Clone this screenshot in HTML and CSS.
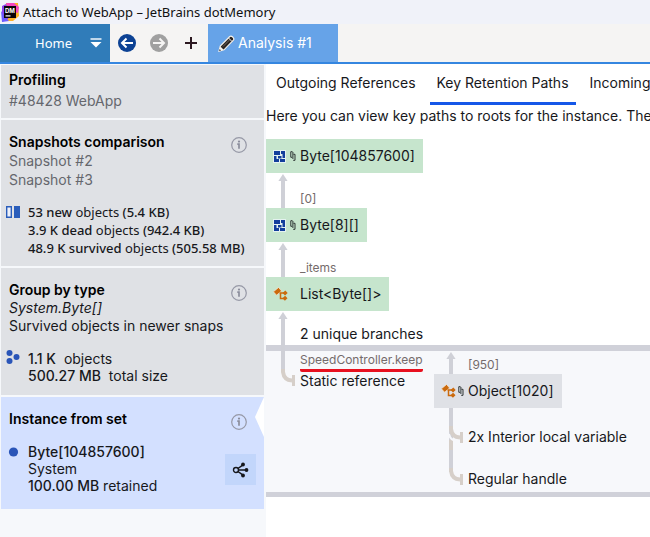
FILE: index.html
```html
<!DOCTYPE html>
<html lang="en">
<head>
    <meta charset="UTF-8">
    <meta name="viewport" content="width=device-width, initial-scale=1.0">
    <title>Attach to WebApp – JetBrains dotMemory</title>
    <link rel="stylesheet" href="styles.css">
</head>
<body>

<!-- Shared icons -->
<svg class="sprite" aria-hidden="true">
    <symbol id="icon-info" viewBox="0 0 16 16">
        <circle cx="8" cy="8" r="7.3" fill="none" stroke="#9698a6" stroke-width="1.2"/>
        <circle cx="8" cy="4.6" r="1.1" fill="#8b8d9c"/>
        <path d="M6.3 7.2H8v4.6" fill="none" stroke="#8b8d9c" stroke-width="1.7"/>
    </symbol>
    <symbol id="icon-array" viewBox="0 0 13 13">
        <path d="M0 0h13v13H0z" fill="#e4f2f0"/>
        <path d="M1 1h6v4H1zM8 1h4v7H9.500V4H8zM1 6h2.500v3H6v3H1zM5 6h3.500v2.500H5zM7 9h5v3H7z" fill="#123e9c"/>
    </symbol>
    <symbol id="icon-link" viewBox="0 0 6 10">
        <path d="M2.500 0.700H0.800v5.600H2.200M3.400 3.300h1.600v6H3.200M2.900 1v7" fill="none" stroke="#2c3333" stroke-width="1"/>
    </symbol>
    <symbol id="icon-class" viewBox="0 0 15 14">
        <path d="M0.400 4.800 5.600 0.400 8.600 4 3.600 8.200z" fill="#cb6a0d" stroke="#f7e9d8" stroke-width="0.700"/>
        <path d="M6.500 6h5M7.500 6v5.500h4" fill="none" stroke="#cb6a0d" stroke-width="1.500"/>
        <path d="M9.600 6 12.300 3.400 14.700 5.900 12 8.600zM9.500 11.300l2.600-2.500 2.400 2.500-2.600 2.500z" fill="#cb6a0d"/>
    </symbol>
    <symbol id="icon-arrow" viewBox="0 0 10 35" preserveAspectRatio="xMidYMin slice">
        <path d="M5 5v30" stroke="#cfd0d7" stroke-width="4"/>
        <path d="M5 1 9.600 8H0.400z" fill="#cfd0d7"/>
    </symbol>
</svg>

<header class="titlebar">
    <svg class="logo" viewBox="0 0 18 20" aria-hidden="true">
        <path d="M5 1h12l1 13-6 5H4z" fill="#ffb224"/>
        <path d="M5 1h8l5 4-1 6-10-3z" fill="#f545c0"/>
        <path d="M1 4l4-2 4 8-2 7-6 3z" fill="#8b42ef"/>
        <path d="M0 9l5 7 3 3-7 1z" fill="#6c5cff"/>
        <path d="M3 4h12v12H3z" fill="#0b0306"/>
        <path d="M4.500 13.300h5v1.200h-5z" fill="#fff"/>
        <text class="logo-text" x="4" y="10.500">DM</text>
    </svg>
    <span>Attach to WebApp – JetBrains dotMemory</span>
</header>

<nav class="toolbar">
    <button class="home" type="button">
        <span>Home</span>
        <svg width="12" height="10" viewBox="0 0 12 10" aria-hidden="true">
            <path d="M0.500 1h11" stroke="#fff" stroke-width="1.400"/>
            <path d="M0.500 4h11L6 9.500z" fill="#fff"/>
        </svg>
    </button>
    <div class="tools">
        <button class="tool" type="button" aria-label="Back">
            <svg width="18" height="18" viewBox="0 0 18 18">
                <circle cx="9" cy="9" r="9" fill="#0d4294"/>
                <path d="M15 9H4.500M8.500 4.500 4 9l4.500 4.500" fill="none" stroke="#fff" stroke-width="2"/>
            </svg>
        </button>
        <button class="tool" type="button" aria-label="Forward">
            <svg width="18" height="18" viewBox="0 0 18 18">
                <circle cx="9" cy="9" r="9" fill="#a0a0a0"/>
                <path d="M3 9h10.500M9.500 4.500 14 9l-4.500 4.500" fill="none" stroke="#f5f4f3" stroke-width="2"/>
            </svg>
        </button>
        <button class="tool" type="button" aria-label="Add">
            <svg width="12" height="12" viewBox="0 0 12 12">
                <path d="M6 0v12M0 6h12" stroke="#2c1820" stroke-width="2"/>
            </svg>
        </button>
    </div>
    <button class="analysis" type="button">
        <svg width="17" height="17" viewBox="0 0 17 17" aria-hidden="true">
            <path d="M1 16.200 2.300 11 11.800 1.500q1.200-1 2.600.3l.8.8q1.200 1.400.2 2.600L6 14.800z" fill="#2b2522" stroke="#f4f2ee" stroke-width="1.200"/>
            <path d="M5 11.500 12 4.500" stroke="#77716c" stroke-width="0.900"/>
            <path d="M10.500 3l3.400 3.400" stroke="#f4f2ee" stroke-width="1"/>
            <path d="M1.200 16l1.200-4.500 3.300 3.300z" fill="#f4f2ee"/>
            <path d="M1.200 16l.5-1.900 1.300 1.300z" fill="#2b2522"/>
        </svg>
        <span>Analysis #1</span>
    </button>
</nav>

<div class="workspace">
    <aside class="sidebar">
        <section class="card card-profiling">
            <h2>Profiling</h2>
            <p class="muted">#48428 WebApp</p>
        </section>

        <section class="card card-snapshots">
            <button class="info" type="button" aria-label="About snapshots comparison"><svg><use href="#icon-info"/></svg></button>
            <h2>Snapshots comparison</h2>
            <p class="muted">Snapshot #2</p>
            <p class="muted">Snapshot #3</p>
            <div class="stats compare">
                <svg width="14" height="12" viewBox="0 0 14 12" aria-hidden="true">
                    <path d="M0.700 0.700h4.600v10.600H0.700z" fill="#edf1fb" stroke="#2a5dbb" stroke-width="1.400"/>
                    <path d="M8 0h6v12H8z" fill="#2a5dbb"/>
                </svg>
                <div>
                    <p><b>53 new</b> objects <b>(5.4 KB)</b></p>
                    <p><b>3.9 K dead</b> objects <b>(942.4 KB)</b></p>
                    <p><b>48.9 K survived</b> objects <b>(505.58 MB)</b></p>
                </div>
            </div>
        </section>

        <section class="card card-group">
            <button class="info" type="button" aria-label="About group by type"><svg><use href="#icon-info"/></svg></button>
            <h2>Group by type</h2>
            <p class="type-name">System.Byte[]</p>
            <p>Survived objects in newer snaps</p>
            <div class="stats totals">
                <svg width="14" height="14" viewBox="0 0 14 14" aria-hidden="true">
                    <circle cx="3.500" cy="3" r="3" fill="#2a55b8"/>
                    <circle cx="3.500" cy="11" r="3" fill="#2a55b8"/>
                    <circle cx="10.500" cy="7" r="3" fill="#2a55b8"/>
                </svg>
                <div>
                    <p><b>1.1 K</b>&nbsp; objects</p>
                    <p><b>500.27 MB</b>&nbsp; total size</p>
                </div>
            </div>
        </section>

        <section class="card card-instance">
            <button class="info" type="button" aria-label="About instance from set"><svg><use href="#icon-info"/></svg></button>
            <h2>Instance from set</h2>
            <div class="stats instance">
                <svg width="14" height="10" viewBox="0 0 14 10" aria-hidden="true">
                    <circle cx="7.500" cy="5" r="4.600" fill="#2a55b8"/>
                </svg>
                <div>
                    <p><b>Byte[104857600]</b></p>
                    <p>System</p>
                    <p><b>100.00 MB</b> retained</p>
                </div>
                <button class="graph-button" type="button" aria-label="Show graph">
                    <svg width="17" height="16" viewBox="0 0 17 16">
                        <path d="M6 6.500 11 2.800M6.500 8H14M6 9.500l5 3.700" fill="none" stroke="#15171c" stroke-width="1.500"/>
                        <circle cx="4" cy="8" r="2.500" fill="none" stroke="#15171c" stroke-width="1.400"/>
                        <circle cx="11" cy="2.500" r="1.900" fill="#15171c"/>
                        <circle cx="14.500" cy="8" r="1.900" fill="#15171c"/>
                        <circle cx="11" cy="13.500" r="1.900" fill="#15171c"/>
                    </svg>
                </button>
            </div>
        </section>
    </aside>

    <main class="content">
        <nav class="tabs">
            <a class="tab" href="#">Outgoing References</a>
            <a class="tab active" href="#">Key Retention Paths</a>
            <a class="tab" href="#">Incoming</a>
        </nav>
        <p class="hint">Here you can view key paths to roots for the instance. The</p>

        <div class="paths">
            <div class="node">
                <svg class="array"><use href="#icon-array"/></svg>
                <svg class="link"><use href="#icon-link"/></svg>
                <span>Byte[104857600]</span>
            </div>
            <div class="edge">
                <svg class="arrow"><use href="#icon-arrow"/></svg>
                <span>[0]</span>
            </div>
            <div class="node">
                <svg class="array"><use href="#icon-array"/></svg>
                <svg class="link"><use href="#icon-link"/></svg>
                <span>Byte[8][]</span>
            </div>
            <div class="edge">
                <svg class="arrow"><use href="#icon-arrow"/></svg>
                <span>_items</span>
            </div>
            <div class="node">
                <svg class="class"><use href="#icon-class"/></svg>
                <span>List&lt;Byte[]&gt;</span>
            </div>
            <div class="branch-count">
                <svg class="trunk" width="24" height="76" viewBox="0 0 24 76" aria-hidden="true">
                    <path d="M5 5v56" fill="none" stroke="#cfd0d7" stroke-width="4"/>
                    <path d="M5 1 9.600 8H0.400z" fill="#cfd0d7"/>
                    <path d="M5 58v3q1 8 9 8.500" fill="none" stroke="#d6cfc9" stroke-width="4"/>
                    <path d="M15.500 64v11" stroke="#d6cfc9" stroke-width="3"/>
                </svg>
                <span>2 unique branches</span>
            </div>

            <div class="branches">
                <div class="branch-static">
                    <p class="field">SpeedController.keep</p>
                    <p class="root">Static reference</p>
                </div>
                <div class="branch-object">
                    <div class="edge">
                        <svg class="arrow"><use href="#icon-arrow"/></svg>
                        <span>[950]</span>
                    </div>
                    <div class="node node-gray">
                        <svg class="class"><use href="#icon-class"/></svg>
                        <svg class="link"><use href="#icon-link"/></svg>
                        <span>Object[1020]</span>
                    </div>
                    <div class="roots">
                        <svg class="root-lines" width="20" height="80" viewBox="0 0 20 80" aria-hidden="true">
                            <path d="M5 0v64" stroke="#cfd0d7" stroke-width="4"/>
                            <path d="M5 32v10" stroke="#d6cfc9" stroke-width="4"/>
                            <path d="M3 26q1 7 11 8" fill="none" stroke="#f7f8fb" stroke-width="2"/>
                            <path d="M5 18v3q1 8 9 8.500M5 60v3q1 8 9 8.500" fill="none" stroke="#d6cfc9" stroke-width="4"/>
                            <path d="M15.500 24v11M15.500 66v11" stroke="#d6cfc9" stroke-width="3"/>
                        </svg>
                        <p>2x Interior local variable</p>
                        <p>Regular handle</p>
                    </div>
                </div>
            </div>
        </div>
    </main>
</div>

</body>
</html>
```

FILE: styles.css
```css
* {
    box-sizing: border-box;
}
body {
    margin: 0;
    min-height: 100vh;
    display: flex;
    flex-direction: column;
    overflow: hidden;
    background-color: #fff;
    color: #17181c;
    font-family: Inter, sans-serif;
    font-size: 14px;
    line-height: 18px;
}
h2, p {
    margin: 0;
}
h2 {
    color: #000;
    font-size: 14px;
    font-weight: 600;
    line-height: 18px;
}
b {
    font-weight: 500;
}
button {
    padding: 0;
    border: 0;
    background: none;
    color: inherit;
    font: inherit;
}
svg {
    flex: none;
    display: block;
}
.sprite {
    position: absolute;
    width: 0;
    height: 0;
}

/* Title bar and toolbar */
.titlebar {
    display: flex;
    align-items: center;
    gap: 4px;
    height: 24px;
    padding-left: 1px;
    background-color: #f0f2f9;
    color: #111;
    font-family: "Noto Sans", sans-serif;
    font-size: 13px;
}
.logo {
    width: 18px;
    height: 20px;
}
.logo-text {
    fill: #fff;
    font: bold 6px Inter, sans-serif;
}
.toolbar {
    display: flex;
    height: 40px;
    border-bottom: 2px solid #3586e0;
    background-color: #f5f4f3;
}
.home {
    display: flex;
    align-items: center;
    justify-content: flex-end;
    gap: 18px;
    width: 110px;
    padding-right: 8px;
    background-color: #307cb9;
    color: #fff;
    font-family: "Noto Sans", sans-serif;
    font-size: 13px;
}
.tools {
    display: flex;
    align-items: center;
    width: 98px;
    padding-left: 1px;
}
.tool {
    display: flex;
    justify-content: center;
    width: 32px;
}
.analysis {
    display: flex;
    align-items: center;
    gap: 3px;
    width: 130px;
    padding-left: 10px;
    background-color: #66a3e8;
    color: #fff;
}

/* Sidebar */
.workspace {
    flex: 1;
    display: flex;
}
.sidebar {
    flex: none;
    width: 266px;
    padding: 1px 2px 0 1px;
    background-color: #f6f8fb;
}
.card {
    position: relative;
    margin-bottom: 2px;
    padding: 0 8px;
    background-color: #dfe1e5;
}
.muted {
    color: #65676d;
}
.card-profiling {
    padding-top: 6px;
    padding-bottom: 8px;
}
.card-profiling .muted {
    margin-top: 3px;
}
.card-snapshots {
    padding-top: 13px;
    padding-bottom: 9px;
}
.card-snapshots .muted {
    line-height: 19px;
}
.info {
    position: absolute;
    top: 17px;
    right: 17px;
}
.info svg {
    width: 16px;
    height: 16px;
}
.stats {
    display: flex;
    gap: 8px;
    margin-left: -3px;
}
.compare {
    margin-top: 14px;
    font-family: "Noto Sans", sans-serif;
    font-size: 13px;
}
.compare svg {
    margin-top: 3px;
}
.card-group {
    padding-top: 13px;
    padding-bottom: 11px;
}
.type-name {
    font-style: italic;
}
.totals {
    margin-top: 15px;
    line-height: 17px;
}
.card-instance {
    padding-top: 13px;
    padding-bottom: 15px;
    background-color: #d3e0ff;
}
.card-instance::after {
    content: "";
    position: absolute;
    top: 0;
    right: 0;
    width: 9px;
    height: 40px;
    background-color: #fff;
    clip-path: polygon(100% 0, 0 50%, 100% 100%);
}
.instance {
    margin-top: 15px;
    line-height: 17px;
}
.instance > svg {
    margin-top: 4px;
}
.graph-button {
    display: flex;
    align-items: center;
    justify-content: center;
    width: 31px;
    height: 31px;
    margin: 11px 0 0 auto;
    background-color: #c2d6fb;
}

/* Tabs */
.content {
    flex: 1;
    min-width: 0;
    overflow: hidden;
}
.tabs {
    display: flex;
    gap: 7px;
    height: 41px;
    padding-left: 3px;
}
.tab {
    padding: 10px 7px 0;
    border-bottom: 3px solid transparent;
    color: #17181c;
    text-decoration: none;
    white-space: nowrap;
}
.tab.active {
    border-bottom-color: #1557e8;
}
.hint {
    padding-top: 2px;
    white-space: nowrap;
}

/* Retention paths */
.paths {
    padding-top: 14px;
}
.node {
    display: flex;
    align-items: center;
    gap: 4px;
    width: max-content;
    height: 34px;
    padding: 0 8px 0 7px;
    background-color: #c6e5cd;
}
.node-gray {
    background-color: #dfe1e6;
}
.node .array {
    width: 13px;
    height: 13px;
}
.node .link {
    width: 6px;
    height: 10px;
}
.node .class {
    width: 15px;
    height: 14px;
}
.node .class + span {
    margin-left: 8px;
}
.node-gray .class {
    margin-right: -2px;
}
.edge {
    display: flex;
    align-items: flex-end;
    gap: 12px;
    height: 35px;
    padding-left: 12px;
    color: #756b6b;
    font-size: 12px;
}
.arrow {
    width: 10px;
    height: 35px;
}
.branch-count {
    position: relative;
    height: 34px;
    padding: 14px 0 0 34px;
}
.trunk {
    position: absolute;
    top: 0;
    left: 12px;
}
.branches {
    display: flex;
    border-top: 6px solid #d0d1d9;
    border-bottom: 5px solid #d0d1d9;
    background-color: #f7f8fb;
}
.branch-static {
    width: 168px;
    padding: 0 14px 0 34px;
    white-space: nowrap;
}
.field {
    width: max-content;
    border-bottom: 3px solid #e8101f;
    border-radius: 2px;
    color: #756b6b;
    font-size: 12px;
}
.branch-object .edge {
    height: 23px;
}
.branch-object .arrow {
    height: 23px;
}
.roots {
    position: relative;
    display: flex;
    flex-direction: column;
    gap: 24px;
    padding: 20px 0 4px 34px;
}
.root-lines {
    position: absolute;
    top: 0;
    left: 12px;
}
```
